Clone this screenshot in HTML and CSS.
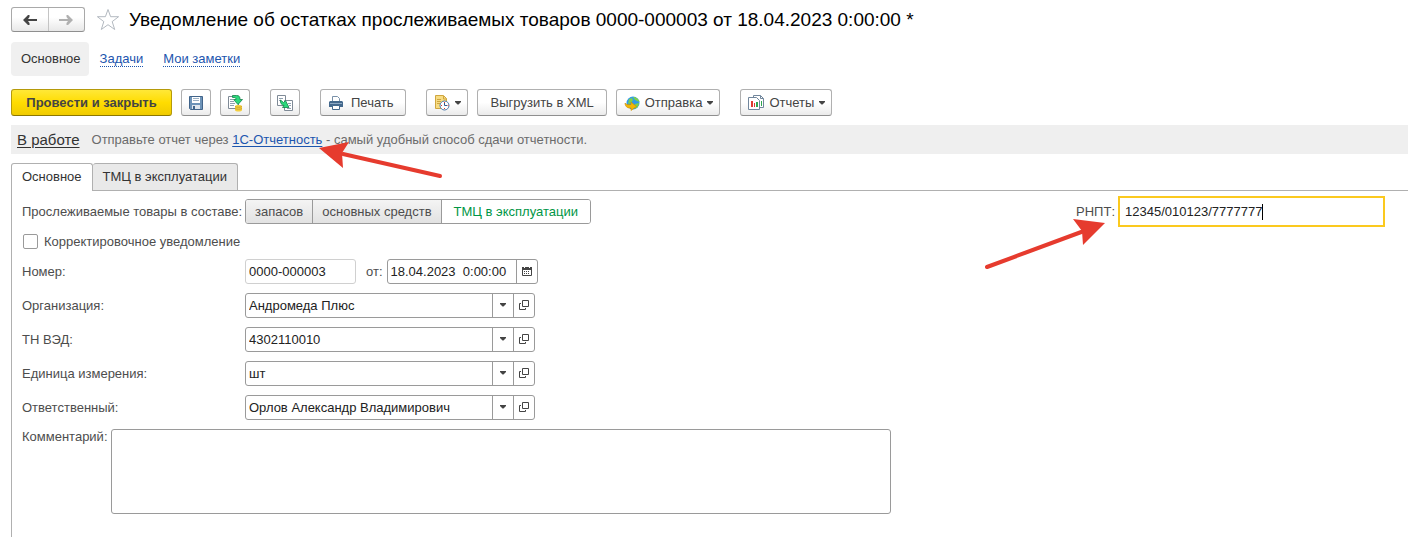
FILE: index.html
```html
<!DOCTYPE html>
<html lang="ru">
  <head>
    <meta charset="UTF-8" />
    <meta name="viewport" content="width=device-width, initial-scale=1.0" />
    <title>Уведомление об остатках прослеживаемых товаров</title>
    <link rel="stylesheet" href="styles.css">
  </head>
  <body>
    <svg class="sprite" aria-hidden="true">
      <symbol id="icon-open" viewBox="0 0 10 10">
        <path d="M3.500.5h6v6h-6zM2 3.500H.5v6h6V8" fill="none" stroke="#444" />
      </symbol>
      <symbol id="icon-caret" viewBox="0 0 6 4">
        <path d="M0 0h6v1L3.500 3.500h-1L0 1z" fill="#444" />
      </symbol>
    </svg>

    <header class="title-bar">
      <div class="history">
        <button type="button" aria-label="Назад">
          <svg width="14" height="10" viewBox="0 0 14 10"><path d="M0 5L5 0h1.500v2L5 4h9v2H5l1.500 2v2H5z" fill="#444" /></svg>
        </button>
        <button type="button" aria-label="Вперед">
          <svg width="14" height="10" viewBox="0 0 14 10"><path d="M14 5L9 0H7.500v2L9 4H0v2h9L7.500 8v2H9z" fill="#b0b0b0" /></svg>
        </button>
      </div>
      <button type="button" class="star" aria-label="Избранное">
        <svg width="24" height="23" viewBox="0 0 24 23"><path d="M12 1.500l2.600 7.200h8l-6.400 4.900 2.500 7.900-6.700-4.800-6.700 4.800 2.500-7.900L1.400 8.700h8z" fill="#fff" stroke="#b3b9c0" /></svg>
      </button>
      <h1>Уведомление об остатках прослеживаемых товаров 0000-000003 от 18.04.2023 0:00:00 *</h1>
    </header>

    <nav class="sections">
      <a href="#" class="active">Основное</a>
      <a href="#"><span>Задачи</span></a>
      <a href="#"><span>Мои заметки</span></a>
    </nav>

    <div class="toolbar">
      <div class="group">
        <button type="button" class="btn primary">Провести и закрыть</button>
        <button type="button" class="btn icon-btn" aria-label="Записать">
          <svg width="16" height="16" viewBox="0 0 16 16">
            <path d="M1.500 1.500h13v13h-12l-1-1z" fill="#6d93b8" stroke="#41648a" />
            <path d="M4 2h8v6H4z" fill="#fff" />
            <path d="M5 3.500h6M5 5.500h6" stroke="#9bb0c4" />
            <path d="M4 10h8v4H4z" fill="#dfe6ee" />
            <path d="M5 11h2v3H5z" fill="#41648a" />
          </svg>
        </button>
        <button type="button" class="btn icon-btn" aria-label="Провести">
          <svg width="18" height="18" viewBox="0 0 18 18">
            <path d="M2.500 2.500h10v12h-10z" fill="#fff" stroke="#7f8a96" />
            <path d="M4 5.500h3M4 7.500h4M4 9.500h5M4 11.500h4" stroke="#8fa0b0" />
            <path d="M6.500 1.500h4c3 0 3.500 1.500 3.500 4h2.500L12 10.500 7.500 5.500H10c0-1.500-.5-2-2-2H6.500z" fill="#2bd97b" stroke="#14824a" stroke-width=".8" />
            <path d="M9 12c0-1.500 7-1.500 7 0v4c0 2-7 2-7 0z" fill="#f4cf3f" />
            <path d="M9 12.500c1 1 6 1 7 0M9 14.500c1 1 6 1 7 0" fill="none" stroke="#d0a52a" />
          </svg>
        </button>
      </div>
      <div class="group">
        <button type="button" class="btn icon-btn" aria-label="Создать на основании">
          <svg width="18" height="18" viewBox="0 0 18 18">
            <path d="M1.500 1.500h8v10h-8z" fill="#fff" stroke="#7f8a96" />
            <path d="M3 4.500h4M3 6.500h2" stroke="#8fa0b0" />
            <path d="M8.500 6.500h8v10h-8z" fill="#fff" stroke="#7f8a96" />
            <path d="M12 9.500h3M13 11.500h2M11 14.500h4" stroke="#8fa0b0" />
            <path d="M4.500 6l3 2.500L9.500 6.500l3.500 7H6.500L8 11.500C5.500 11 4 9 4.500 6z" fill="#2bd97b" stroke="#14824a" stroke-width=".8" />
          </svg>
        </button>
      </div>
      <div class="group">
        <button type="button" class="btn print">
          <svg width="16" height="16" viewBox="0 0 16 16">
            <path d="M4.500 6V1.500h5l2 2V6" fill="#fff" stroke="#7890a8" />
            <path d="M2 6h12l1 1v5H1V7z" fill="#44698d" />
            <path d="M2 8.500h12" stroke="#8da9c4" />
            <path d="M4.500 10.500h7v4h-7z" fill="#fff" stroke="#44698d" />
          </svg>
          Печать
        </button>
      </div>
      <div class="group">
        <button type="button" class="btn compact" aria-label="Запланировать">
          <svg width="16" height="17" viewBox="0 0 16 17">
            <path d="M1.500 1.500h8l3 3v10h-11z" fill="#f7dc83" stroke="#cfa640" />
            <path d="M3 5.500h4M3 7.500h4M3 9.500h3M9.500 2v3h3" fill="none" stroke="#cfa640" />
            <circle cx="10.500" cy="11.500" r="4.500" fill="#fff" stroke="#4a78a8" />
            <path d="M10.500 9v2.500H13" fill="none" stroke="#2c5e94" />
            <path d="M10 8.500h1M10 14.500h1M7 11.500h1M13.500 11.500h1" stroke="#e03c31" />
          </svg>
          <svg width="6" height="4"><use href="#icon-caret" /></svg>
        </button>
        <button type="button" class="btn wide">Выгрузить в XML</button>
        <button type="button" class="btn compact">
          <svg width="16" height="16" viewBox="0 0 16 16">
            <circle cx="9" cy="8" r="6.500" fill="#2f9be8" />
            <path d="M9 2c3-.5 6 2 6.500 5L13 6l-2-1zM5 4l3-1 1 2-2 3-3 1zM11 9l4-1c0 3-2 5-4 6z" fill="#7ccf4d" />
            <path d="M1 8c1 1.500 3 2 6 1.500V7l5.500 4.500L7 15.500V13c-4 .5-6-2-6-5z" fill="#f2b705" stroke="#c98c00" stroke-width=".6" />
          </svg>
          <span>Отправка</span>
          <svg width="6" height="4"><use href="#icon-caret" /></svg>
        </button>
      </div>
      <div class="group">
        <button type="button" class="btn compact">
          <svg width="16" height="16" viewBox="0 0 16 16">
            <path d="M5.500.5h7l3 3v9h-10z" fill="#fff" stroke="#71869c" />
            <path d="M12.500.5v3h3" fill="none" stroke="#71869c" />
            <path d="M13.500 6v5" stroke="#2fa84f" />
            <path d="M.5 2.500h8l3 3v9H.5z" fill="#fff" stroke="#71869c" />
            <path d="M3 6h2v6H3z" fill="#e03c31" />
            <path d="M6 8h1v4H6z" fill="#e03c31" />
            <path d="M8 7h2v5H8z" fill="#2fa84f" />
          </svg>
          <span>Отчеты</span>
          <svg width="6" height="4"><use href="#icon-caret" /></svg>
        </button>
      </div>
    </div>

    <div class="status">
      <a href="#" class="state">В работе</a>
      <p>Отправьте отчет через <span class="marked"><a href="#">1С-Отчетность</a><svg class="arrow arrow-link" width="126" height="42" viewBox="0 0 126 42" aria-hidden="true"><path d="M24 13l97 22" stroke="#e63b2e" stroke-width="4" stroke-linecap="round" /><path d="M0 7l30-6-7 11 1 15z" fill="#e63b2e" /></svg></span> - самый удобный способ сдачи отчетности.</p>
    </div>

    <main>
      <div class="tabs" role="tablist">
        <button type="button" role="tab" class="active" aria-selected="true">Основное</button>
        <button type="button" role="tab" aria-selected="false">ТМЦ в эксплуатации</button>
      </div>

      <form class="panel">
        <div class="fields">
          <div class="row">
            <span class="caption">Прослеживаемые товары в составе:</span>
            <div class="switch">
              <button type="button">запасов</button>
              <button type="button">основных средств</button>
              <button type="button" class="active">ТМЦ в эксплуатации</button>
            </div>
          </div>
          <label class="check"><input type="checkbox"> Корректировочное уведомление</label>
          <div class="row">
            <label class="caption" for="number">Номер:</label>
            <input type="text" id="number" class="number" value="0000-000003" readonly>
            <label class="from" for="date">от:</label>
            <div class="combo date">
              <input type="text" id="date" value="18.04.2023  0:00:00">
              <button type="button" aria-label="Выбрать дату">
                <svg width="10" height="10" viewBox="0 0 10 10">
                  <path d="M.5 1.500h9v8h-9z" fill="#fff" stroke="#444" />
                  <path d="M0 1h10v3H0z" fill="#444" />
                  <path d="M2.500 0v2M7.500 0v2" stroke="#fff" />
                  <path d="M2 5.500h6M2 7.500h6" stroke="#444" stroke-dasharray="1 1" />
                </svg>
              </button>
            </div>
          </div>
          <div class="row">
            <label class="caption" for="company">Организация:</label>
            <div class="combo">
              <input type="text" id="company" value="Андромеда Плюс">
              <button type="button" aria-label="Выбрать"><svg width="6" height="4"><use href="#icon-caret" /></svg></button>
              <button type="button" aria-label="Открыть"><svg width="10" height="10"><use href="#icon-open" /></svg></button>
            </div>
          </div>
          <div class="row">
            <label class="caption" for="code">ТН ВЭД:</label>
            <div class="combo">
              <input type="text" id="code" value="4302110010">
              <button type="button" aria-label="Выбрать"><svg width="6" height="4"><use href="#icon-caret" /></svg></button>
              <button type="button" aria-label="Открыть"><svg width="10" height="10"><use href="#icon-open" /></svg></button>
            </div>
          </div>
          <div class="row">
            <label class="caption" for="unit">Единица измерения:</label>
            <div class="combo">
              <input type="text" id="unit" value="шт">
              <button type="button" aria-label="Выбрать"><svg width="6" height="4"><use href="#icon-caret" /></svg></button>
              <button type="button" aria-label="Открыть"><svg width="10" height="10"><use href="#icon-open" /></svg></button>
            </div>
          </div>
          <div class="row">
            <label class="caption" for="person">Ответственный:</label>
            <div class="combo">
              <input type="text" id="person" value="Орлов Александр Владимирович">
              <button type="button" aria-label="Выбрать"><svg width="6" height="4"><use href="#icon-caret" /></svg></button>
              <button type="button" aria-label="Открыть"><svg width="10" height="10"><use href="#icon-open" /></svg></button>
            </div>
          </div>
          <div class="row comment">
            <label for="comment">Комментарий:</label>
            <textarea id="comment"></textarea>
          </div>
        </div>

        <div class="rnpt">
          <label for="rnpt">РНПТ:</label>
          <div class="focused">
            <input type="text" id="rnpt" value="12345/010123/7777777">
            <span class="cursor"></span>
          </div>
          <svg class="arrow arrow-rnpt" width="122" height="54" viewBox="0 0 122 54" aria-hidden="true"><path d="M3 50l97-36" stroke="#e63b2e" stroke-width="4" stroke-linecap="round" /><path d="M121 6L89 2l9 12 1 14z" fill="#e63b2e" /></svg>
        </div>
      </form>
    </main>
  </body>
</html>
```

FILE: styles.css
```css
* {
  box-sizing: border-box;
}
body {
  font-family: "Liberation Sans", Arial, sans-serif;
  font-size: 13px;
  line-height: 16px;
  color: #4d4d4d;
  background: #fff;
  margin: 0;
  padding: 7px 0 0 11px;
  min-height: 100vh;
  display: flex;
  flex-direction: column;
}
button,
input,
textarea {
  font: inherit;
  color: inherit;
  margin: 0;
}
button {
  cursor: pointer;
}
svg {
  display: block;
  flex: none;
}
a {
  color: #1c55ae;
}
.sprite {
  position: absolute;
  width: 0;
  height: 0;
}

/* Title */
.title-bar {
  display: flex;
  align-items: center;
  height: 25px;
}
.history {
  display: flex;
  width: 74px;
  height: 25px;
  border: 1px solid #a9a9a9;
  border-bottom-color: #8f8f8f;
  border-radius: 3px;
  background: linear-gradient(#fff 40%, #e8e8e8);
}
.history button {
  flex: 1;
  display: flex;
  align-items: center;
  justify-content: center;
  border: none;
  background: none;
  padding: 0;
}
.history button + button {
  border-left: 1px solid #c4c4c4;
}
.star {
  border: none;
  background: none;
  padding: 0;
  margin: 0 9px 0 11px;
}
h1 {
  font-size: 19px;
  line-height: 24px;
  font-weight: normal;
  color: #000;
  margin: 0;
  white-space: nowrap;
}

/* Sections */
.sections {
  display: flex;
  align-items: center;
  gap: 20px;
  height: 34px;
  margin-top: 10px;
}
.sections a {
  text-decoration: none;
}
.sections span {
  border-bottom: 1px dotted #1c55ae;
}
.sections .active {
  color: #333;
  background: #f0f0f0;
  border-radius: 4px;
  padding: 9px 8px 9px 10px;
  margin-right: -9px;
}

/* Toolbar */
.toolbar {
  display: flex;
  gap: 20px;
  margin-top: 13px;
}
.group {
  display: flex;
  gap: 9px;
}
.btn {
  display: flex;
  align-items: center;
  justify-content: center;
  height: 27px;
  padding: 0 13px;
  border: 1px solid #b0b0b0;
  border-bottom-color: #8f8f8f;
  border-radius: 3px;
  background: linear-gradient(#fff 50%, #ebebeb);
  color: #444;
  white-space: nowrap;
}
.btn.primary {
  min-width: 161px;
  font-weight: bold;
  border-color: #b59a0a;
  border-bottom-color: #8c7700;
  background: linear-gradient(#ffe838, #ffdc00 50%, #f0cb00);
}
.btn.icon-btn {
  width: 30px;
  padding: 0;
}
.btn.wide {
  padding: 0 12px 0 13px;
}
.btn.print {
  gap: 7px;
  padding: 0 11px 0 7px;
}
.btn.compact {
  gap: 5px;
  padding: 0 6px 0 7px;
}

/* Status */
.status {
  display: flex;
  align-items: center;
  gap: 12px;
  height: 29px;
  margin-top: 9px;
  padding: 0 6px;
  background: #efefef;
}
.state {
  font-size: 15px;
  color: #333;
  text-underline-offset: 2px;
}
.status p {
  margin: 0;
  color: #6b6b6b;
}
.status p a {
  text-underline-offset: 2px;
}
.marked {
  position: relative;
}
.arrow {
  position: absolute;
  pointer-events: none;
}
.arrow-link {
  left: calc(100% - 3px);
  top: 9px;
}

/* Tabs */
main {
  flex: 1;
  display: flex;
  flex-direction: column;
  margin-top: 9px;
}
.tabs {
  display: flex;
}
.tabs button {
  height: 27px;
  padding: 0 10px;
  border: 1px solid #b0b0b0;
  border-bottom: none;
  border-radius: 3px 3px 0 0;
  background: #e9e9e9;
  color: #333;
}
.tabs button + button {
  border-left: none;
}
.tabs .active {
  height: 28px;
  margin-bottom: -1px;
  padding: 0 10px 2px;
  background: #fff;
  z-index: 1;
}
.panel {
  flex: 1;
  display: flex;
  justify-content: space-between;
  align-items: flex-start;
  border: solid #b0b0b0;
  border-width: 1px 0 0 1px;
  padding: 8px 23px 22px 10px;
}
.fields {
  display: flex;
  flex-direction: column;
  gap: 9px;
}
.row {
  display: flex;
  align-items: center;
}
.caption {
  width: 223px;
  white-space: nowrap;
}
.switch {
  display: flex;
  height: 25px;
  border: 1px solid #9a9a9a;
  border-radius: 3px;
  overflow: hidden;
}
.switch button {
  border: none;
  border-right: 1px solid #9a9a9a;
  padding: 0 9px;
  background: linear-gradient(#f4f4f4, #e2e2e2);
}
.switch .active {
  border-right: none;
  padding: 0 12px;
  background: #fff;
  color: #009646;
}
.check {
  display: flex;
  align-items: center;
  gap: 6px;
  height: 17px;
}
.check input {
  appearance: none;
  width: 15px;
  height: 15px;
  margin: 0 0 0 1px;
  border: 1px solid #9a9a9a;
  border-radius: 2px;
}
.number,
.combo {
  height: 25px;
  border: 1px solid #9a9a9a;
  border-radius: 3px;
  color: #222;
}
.number {
  width: 111px;
  padding: 0 3px;
  border-color: #d0d0d0;
}
.from {
  margin: 0 4px 0 10px;
}
.combo {
  display: flex;
  width: 290px;
}
.combo.date {
  width: 151px;
}
.combo input {
  flex: 1;
  min-width: 0;
  border: none;
  background: none;
  padding: 0 3px;
  outline: none;
  white-space: pre;
}
.combo button {
  width: 21px;
  display: flex;
  align-items: center;
  justify-content: center;
  border: none;
  border-left: 1px solid #9a9a9a;
  background: none;
  padding: 0 0 2px;
}
.comment {
  align-items: flex-start;
}
.comment label {
  width: 89px;
}
.comment textarea {
  width: 780px;
  height: 85px;
  border: 1px solid #9a9a9a;
  border-radius: 3px;
  resize: none;
}

/* Focused field on the right */
.rnpt {
  position: relative;
  display: flex;
  align-items: center;
  gap: 3px;
  margin-top: -3px;
}
.focused {
  display: flex;
  align-items: center;
  width: 267px;
  height: 31px;
  border: 2px solid #fbc91e;
  padding: 0 5px;
  color: #222;
}
.focused input {
  field-sizing: content;
  border: none;
  background: none;
  padding: 0;
  outline: none;
}
.cursor {
  width: 1px;
  height: 16px;
  background: #000;
}
.arrow-rnpt {
  right: 279px;
  top: 21px;
}
```
